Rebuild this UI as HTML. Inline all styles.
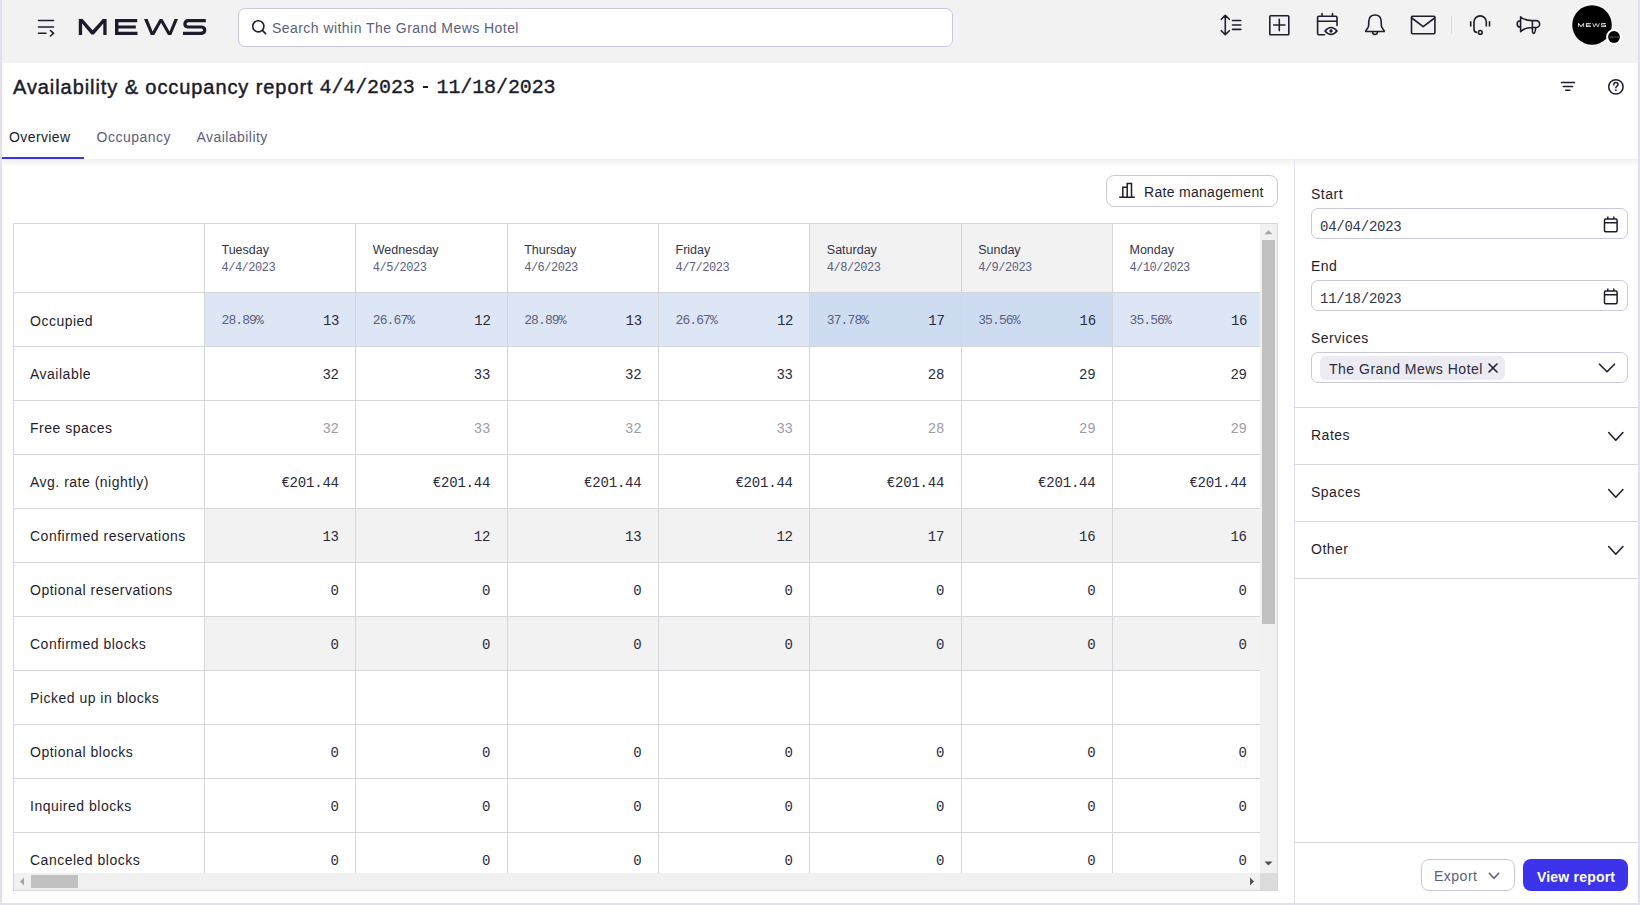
<!DOCTYPE html>
<html><head><meta charset="utf-8"><title>Availability & occupancy report</title>
<style>
*{box-sizing:border-box;margin:0;padding:0}
html,body{width:1640px;height:905px;overflow:hidden;background:#fff}
body{position:relative;font-family:"Liberation Sans",sans-serif;color:#1f1e2e;font-size:14px}
.abs{position:absolute}
.t{position:absolute;white-space:nowrap;line-height:20px;letter-spacing:0.5px}
.mono{font-family:"Liberation Mono",monospace}
svg{position:absolute;overflow:visible}
</style></head><body>

<div class="abs" style="left:0;top:0;width:2px;height:905px;background:#e1e0ec"></div>
<div class="abs" style="left:1638px;top:0;width:2px;height:905px;background:#e1e0ec"></div>
<div class="abs" style="left:0;top:903px;width:1640px;height:2px;background:#e1e0ec"></div>
<div class="abs" style="left:2px;top:0;width:1636px;height:63px;background:#f2f2f2"></div>
<svg style="left:0;top:0" width="1" height="1"><g stroke="#1f1e2e" stroke-width="1.6" stroke-linecap="round" fill="none"><path d="M38.5 20.5H53.5M38.5 27H53.5M38.5 33.3H46M50.5 30.5L53.5 33.3L50.5 36"/></g></svg>
<svg style="left:0;top:0" width="1" height="1"><g fill="#1c1b2b"><g id="mewslogo">
<path d="M78.8 19H82.6L92.6 30.2L102.8 19H106.6V35H103.3V23.6L93.8 34.4H91.4L82.1 23.6V35H78.8Z"/>
<path d="M115 19H137.2V22.2H118.4V25.6H135.8V28.5H118.4V31.8H137.5V35H115Z"/>
<path d="M144 19H147.6L152.6 31.5L159.7 19H162.4L169.5 31.5L174.5 19H178L171.3 35H168L161.1 22.8L154.2 35H150.8Z"/>
<path d="M188.5 19H205.8V22.2H189.5C187.5 22.2 186.6 22.9 186.6 23.9C186.6 24.9 187.5 25.5 189.5 25.5H200.5C204.7 25.5 206.3 27 206.3 30C206.3 33 204.5 35 200 35H183V31.8H200.3C202.3 31.8 203 31.1 203 30.1C203 29.1 202.3 28.5 200.3 28.5H189.2C185 28.5 183.3 27 183.3 24C183.3 21 185 19 188.5 19Z"/>
</g></g></svg>
<div class="abs" style="left:238px;top:8px;width:715px;height:39px;border:1px solid #c9c7de;border-radius:7px;background:#fff"></div>
<svg style="left:0;top:0" width="1" height="1"><g stroke="#1f1e2e" stroke-width="1.6" fill="none" stroke-linecap="round"><circle cx="258.3" cy="26.3" r="5.6"/><path d="M262.4 30.4L265.6 33.6"/></g></svg>
<div class="t" style="left:272px;top:18.4px;letter-spacing:0.45px;color:#5c5e7e">Search within The Grand Mews Hotel</div>
<svg style="left:0;top:0" width="1" height="1"><g stroke="#1f1e2e" stroke-width="1.6" fill="none" stroke-linecap="round" stroke-linejoin="round">
<path d="M1225.3 15.5V34.5M1221.3 19.3L1225.3 15.3L1229.3 19.3M1221.3 30.7L1225.3 34.7L1229.3 30.7M1232.5 20.5H1240.8M1232.5 25H1240.8M1232.5 29.4H1240.8"/>
<rect x="1269.8" y="15.7" width="19" height="19" rx="0.8"/>
<path d="M1279.3 19.4V30.6M1273.7 25H1284.9"/>
<path d="M1324.5 34.8H1318.8Q1317.6 34.8 1317.6 33.6V17.4Q1317.6 16.3 1318.8 16.3H1335.8Q1337 16.3 1337 17.4V25.5M1317.6 21.3H1337M1322 13.5V16.3M1332.5 13.5V16.3"/>
<path d="M1325 31Q1331 24 1337 31Q1331 38 1325 31Z"/>
<circle cx="1331" cy="31" r="0.9" fill="#1f1e2e"/>
<path d="M1365.8 30.8Q1367.4 29 1368.5 26.5Q1368.8 24 1368.8 21.5Q1369 15 1375 15Q1381 15 1381.2 21.5Q1381.2 24 1381.5 26.5Q1382.6 29 1384.2 30.8Q1384.5 31.5 1383.8 31.5H1366.2Q1365.5 31.5 1365.8 30.8ZM1372.5 31.5Q1372.5 34.5 1375 34.5Q1377.5 34.5 1377.5 31.5"/>
<rect x="1411.5" y="16.3" width="23.4" height="17.5" rx="1"/>
<path d="M1411.8 18L1423.2 26.6L1434.6 18"/>
<path d="M1486.3 26V22A6.15 6.15 0 0 0 1474 22V29.3Q1474 32 1476.5 32.4"/>
<circle cx="1480.3" cy="32.4" r="1.85"/>
<path d="M1470.7 21.8V26M1489.5 21.8V26"/>
<path d="M1520.6 16.8V31.6M1520.6 17Q1524 20.3 1532 20.6H1536.2A3.45 3.45 0 0 1 1536.2 27.5H1532Q1524 27.8 1520.6 31.6M1520.4 20.8A3.2 3.2 0 0 0 1520.4 27.2M1532.4 20.8V30.8Q1532.8 33.4 1533.9 33.4Q1535.2 33.2 1535.7 27.8"/>
</g>
<path d="M1451.5 16.5V33.5" stroke="#d8d7e6" stroke-width="1"/>
</svg>
<svg style="left:0;top:0" width="1" height="1">
<circle cx="1592" cy="25" r="20.6" fill="#fff"/><circle cx="1592" cy="25" r="19.8" fill="#000"/>
<use href="#mewslogo" transform="translate(1578 23.2) scale(0.2196 0.245) translate(-78.8 -19)" fill="#fff"/>
<circle cx="1614" cy="37" r="7.9" fill="#fff"/><circle cx="1614" cy="37" r="5.9" fill="#000"/><use href="#mewslogo" transform="translate(1609.4 36.3) scale(0.0737 0.094) translate(-78.8 -19)" fill="#999"/>
</svg>
<div class="t" style="left:13px;top:75px;font-size:20px;line-height:24px;letter-spacing:0.92px;-webkit-text-stroke:0.45px #1c1b2b;color:#1c1b2b">Availability &amp; occupancy report</div>
<div class="t mono" style="left:319.5px;top:75.5px;font-size:20px;line-height:24px;letter-spacing:-0.1px;-webkit-text-stroke:0.35px #1c1b2b;color:#1c1b2b">4/4/2023</div>
<div class="abs" style="left:422.7px;top:86.3px;width:5px;height:2px;background:#1c1b2b"></div>
<div class="t mono" style="left:436.5px;top:75.5px;font-size:20px;line-height:24px;letter-spacing:-0.1px;-webkit-text-stroke:0.35px #1c1b2b;color:#1c1b2b">11/18/2023</div>
<svg style="left:0;top:0" width="1" height="1"><g stroke="#1f1e2e" stroke-width="1.5" fill="none" stroke-linecap="round">
<path d="M1561.5 82.6H1574.5M1563.3 86.5H1572.6M1565.7 90.3H1569.9"/>
<circle cx="1615.9" cy="86.9" r="7.2"/>
<path d="M1613.8 84.8Q1613.8 82.6 1615.9 82.6Q1618 82.6 1618 84.6Q1618 85.8 1616.5 86.5Q1615.9 86.9 1615.9 87.8"/>
</g><circle cx="1615.9" cy="90.2" r="0.9" fill="#1f1e2e"/></svg>
<div class="t" style="left:9px;top:126.5px;letter-spacing:0.4px;color:#1c1b2b">Overview</div>
<div class="t" style="left:96.5px;top:126.5px;color:#5c5e7e">Occupancy</div>
<div class="t" style="left:196.5px;top:126.5px;letter-spacing:0.45px;color:#5c5e7e">Availability</div>
<div class="abs" style="left:2px;top:157px;width:82px;height:2px;background:#3b33e8"></div>
<div class="abs" style="left:2px;top:159px;width:1636px;height:8px;background:linear-gradient(#efefef,#fff)"></div>
<div class="abs" style="left:1294px;top:159px;width:1px;height:744px;background:#e1e0ec"></div>
<div class="t" style="left:1311px;top:184px">Start</div>
<div class="abs" style="left:1311px;top:208px;width:317px;height:31px;border:1px solid #c9c7de;border-radius:7px"></div>
<div class="t mono" style="left:1320px;top:216.5px;letter-spacing:-0.25px;color:#34344a">04/04/2023</div>
<div class="t" style="left:1311px;top:256px">End</div>
<div class="abs" style="left:1311px;top:280px;width:317px;height:31px;border:1px solid #c9c7de;border-radius:7px"></div>
<div class="t mono" style="left:1320px;top:288.5px;letter-spacing:-0.25px;color:#34344a">11/18/2023</div>
<svg style="left:0;top:0" width="1" height="1"><g stroke="#1f1e2e" stroke-width="1.5" fill="none"><rect x="1604.5" y="219.1" width="12.6" height="12.6" rx="1.2"/><path d="M1604.5 222.7H1617.1 M1607.8 216.5V219.1 M1613.8 216.5V219.1"/><rect x="1604.5" y="291.1" width="12.6" height="12.6" rx="1.2"/><path d="M1604.5 294.7H1617.1 M1607.8 288.5V291.1 M1613.8 288.5V291.1"/></g></svg>
<div class="t" style="left:1311px;top:328px">Services</div>
<div class="abs" style="left:1311px;top:352px;width:317px;height:31px;border:1px solid #c9c7de;border-radius:7px"></div>
<div class="abs" style="left:1320px;top:356px;width:185px;height:24px;border-radius:6px;background:#ecebf3"></div>
<div class="t" style="left:1329px;top:359px;color:#2a2a3a">The Grand Mews Hotel</div>
<svg style="left:0;top:0" width="1" height="1"><g stroke="#1f1e2e" stroke-width="1.6" fill="none" stroke-linecap="round" stroke-linejoin="round"><path d="M1489 364L1497 372M1497 364L1489 372"/><path d="M1599.5 364.2L1607 371.8L1614.5 364.2"/></g></svg>
<div class="abs" style="left:1295px;top:407px;width:343px;height:1px;background:#d7d7dd"></div>
<div class="t" style="left:1311px;top:425px">Rates</div>
<svg style="left:0;top:0" width="1" height="1"><path d="M1608.7 432.5L1615.8 440.2L1622.9 432.5" stroke="#1f1e2e" stroke-width="1.6" fill="none" stroke-linecap="round" stroke-linejoin="round"/></svg>
<div class="abs" style="left:1295px;top:464px;width:343px;height:1px;background:#d7d7dd"></div>
<div class="t" style="left:1311px;top:482px">Spaces</div>
<svg style="left:0;top:0" width="1" height="1"><path d="M1608.7 489.5L1615.8 497.2L1622.9 489.5" stroke="#1f1e2e" stroke-width="1.6" fill="none" stroke-linecap="round" stroke-linejoin="round"/></svg>
<div class="abs" style="left:1295px;top:521px;width:343px;height:1px;background:#d7d7dd"></div>
<div class="t" style="left:1311px;top:539px">Other</div>
<svg style="left:0;top:0" width="1" height="1"><path d="M1608.7 546.5L1615.8 554.2L1622.9 546.5" stroke="#1f1e2e" stroke-width="1.6" fill="none" stroke-linecap="round" stroke-linejoin="round"/></svg>
<div class="abs" style="left:1295px;top:578px;width:343px;height:1px;background:#d7d7dd"></div>
<div class="abs" style="left:1295px;top:842px;width:343px;height:1px;background:#d7d7dd"></div>
<div class="abs" style="left:1421px;top:859px;width:94px;height:32px;border:1px solid #c9c7de;border-radius:8px"></div>
<div class="t" style="left:1434px;top:866px;color:#5c5e7e">Export</div>
<svg style="left:0;top:0" width="1" height="1"><path d="M1489.3 873.3L1494 878.3L1498.7 873.3" stroke="#5c5e7e" stroke-width="1.6" fill="none" stroke-linecap="round" stroke-linejoin="round"/></svg>
<div class="abs" style="left:1523px;top:859px;width:105px;height:32px;border-radius:8px;background:#3c33ea"></div>
<div class="t" style="left:1537px;top:867px;color:#fff;font-weight:bold;letter-spacing:0.2px">View report</div>
<div class="abs" style="left:1106px;top:175px;width:172px;height:32px;border:1px solid #c9c7de;border-radius:8px"></div>
<svg style="left:0;top:0" width="1" height="1"><g stroke="#1f1e2e" stroke-width="1.5" fill="none"><path d="M1119.2 197.2H1134.8M1122.8 197V187.3H1127.2V197M1127.2 197V183.6H1131.5V197"/></g></svg>
<div class="t" style="left:1144px;top:182px;letter-spacing:0.3px">Rate management</div>
<div class="abs" style="left:13px;top:223px;width:1265px;height:668px;border:1px solid #d6d6da;overflow:hidden">
<div class="abs" style="left:796.33px;top:-1.00px;width:151.33px;height:69.00px;background:#f2f2f2"></div>
<div class="abs" style="left:947.67px;top:-1.00px;width:151.33px;height:69.00px;background:#f2f2f2"></div>
<div class="abs" style="left:191.00px;top:69.00px;width:151.33px;height:53.00px;background:#dde6f5"></div>
<div class="abs" style="left:342.33px;top:69.00px;width:151.33px;height:53.00px;background:#dde6f5"></div>
<div class="abs" style="left:493.67px;top:69.00px;width:151.33px;height:53.00px;background:#dde6f5"></div>
<div class="abs" style="left:645.00px;top:69.00px;width:151.33px;height:53.00px;background:#dde6f5"></div>
<div class="abs" style="left:796.33px;top:69.00px;width:151.33px;height:53.00px;background:#cedcf2"></div>
<div class="abs" style="left:947.67px;top:69.00px;width:151.33px;height:53.00px;background:#cedcf2"></div>
<div class="abs" style="left:1099.00px;top:69.00px;width:151.33px;height:53.00px;background:#dde6f5"></div>
<div class="abs" style="left:191.00px;top:285.00px;width:1055.00px;height:53.00px;background:#f2f2f2"></div>
<div class="abs" style="left:191.00px;top:393.00px;width:1055.00px;height:53.00px;background:#f2f2f2"></div>
<div class="abs" style="left:-1.00px;top:68.00px;width:1247.00px;height:1.00px;background:#d6d6da"></div>
<div class="abs" style="left:-1.00px;top:122.00px;width:1247.00px;height:1.00px;background:#d6d6da"></div>
<div class="abs" style="left:-1.00px;top:176.00px;width:1247.00px;height:1.00px;background:#d6d6da"></div>
<div class="abs" style="left:-1.00px;top:230.00px;width:1247.00px;height:1.00px;background:#d6d6da"></div>
<div class="abs" style="left:-1.00px;top:284.00px;width:1247.00px;height:1.00px;background:#d6d6da"></div>
<div class="abs" style="left:-1.00px;top:338.00px;width:1247.00px;height:1.00px;background:#d6d6da"></div>
<div class="abs" style="left:-1.00px;top:392.00px;width:1247.00px;height:1.00px;background:#d6d6da"></div>
<div class="abs" style="left:-1.00px;top:446.00px;width:1247.00px;height:1.00px;background:#d6d6da"></div>
<div class="abs" style="left:-1.00px;top:500.00px;width:1247.00px;height:1.00px;background:#d6d6da"></div>
<div class="abs" style="left:-1.00px;top:554.00px;width:1247.00px;height:1.00px;background:#d6d6da"></div>
<div class="abs" style="left:-1.00px;top:608.00px;width:1247.00px;height:1.00px;background:#d6d6da"></div>
<div class="abs" style="left:-1.00px;top:662.00px;width:1247.00px;height:1.00px;background:#d6d6da"></div>
<div class="abs" style="left:190.00px;top:-1.00px;width:1.00px;height:668.00px;background:#d6d6da"></div>
<div class="abs" style="left:341.33px;top:-1.00px;width:1.00px;height:668.00px;background:#d6d6da"></div>
<div class="abs" style="left:492.67px;top:-1.00px;width:1.00px;height:668.00px;background:#d6d6da"></div>
<div class="abs" style="left:644.00px;top:-1.00px;width:1.00px;height:668.00px;background:#d6d6da"></div>
<div class="abs" style="left:795.33px;top:-1.00px;width:1.00px;height:668.00px;background:#d6d6da"></div>
<div class="abs" style="left:946.67px;top:-1.00px;width:1.00px;height:668.00px;background:#d6d6da"></div>
<div class="abs" style="left:1098.00px;top:-1.00px;width:1.00px;height:668.00px;background:#d6d6da"></div>
<div class="t" style="left:207.5px;top:17.5px;font-size:12.5px;line-height:16px;letter-spacing:0px;color:#33334a">Tuesday</div>
<div class="t mono" style="left:207.5px;top:36px;font-size:12px;line-height:16px;letter-spacing:-0.5px;color:#5c5e7e">4/4/2023</div>
<div class="t" style="left:358.8px;top:17.5px;font-size:12.5px;line-height:16px;letter-spacing:0px;color:#33334a">Wednesday</div>
<div class="t mono" style="left:358.8px;top:36px;font-size:12px;line-height:16px;letter-spacing:-0.5px;color:#5c5e7e">4/5/2023</div>
<div class="t" style="left:510.2px;top:17.5px;font-size:12.5px;line-height:16px;letter-spacing:0px;color:#33334a">Thursday</div>
<div class="t mono" style="left:510.2px;top:36px;font-size:12px;line-height:16px;letter-spacing:-0.5px;color:#5c5e7e">4/6/2023</div>
<div class="t" style="left:661.5px;top:17.5px;font-size:12.5px;line-height:16px;letter-spacing:0px;color:#33334a">Friday</div>
<div class="t mono" style="left:661.5px;top:36px;font-size:12px;line-height:16px;letter-spacing:-0.5px;color:#5c5e7e">4/7/2023</div>
<div class="t" style="left:812.8px;top:17.5px;font-size:12.5px;line-height:16px;letter-spacing:0px;color:#33334a">Saturday</div>
<div class="t mono" style="left:812.8px;top:36px;font-size:12px;line-height:16px;letter-spacing:-0.5px;color:#5c5e7e">4/8/2023</div>
<div class="t" style="left:964.2px;top:17.5px;font-size:12.5px;line-height:16px;letter-spacing:0px;color:#33334a">Sunday</div>
<div class="t mono" style="left:964.2px;top:36px;font-size:12px;line-height:16px;letter-spacing:-0.5px;color:#5c5e7e">4/9/2023</div>
<div class="t" style="left:1115.5px;top:17.5px;font-size:12.5px;line-height:16px;letter-spacing:0px;color:#33334a">Monday</div>
<div class="t mono" style="left:1115.5px;top:36px;font-size:12px;line-height:16px;letter-spacing:-0.5px;color:#5c5e7e">4/10/2023</div>
<div class="t" style="left:16px;top:87px">Occupied</div>
<div class="t mono" style="left:207.5px;top:87px;font-size:13px;letter-spacing:-0.9px;color:#5c5e7e">28.89%</div>
<div class="t mono" style="right:937.7px;top:87px;font-size:14px;letter-spacing:-0.2px;color:#2b2b3d">13</div>
<div class="t mono" style="left:358.8px;top:87px;font-size:13px;letter-spacing:-0.9px;color:#5c5e7e">26.67%</div>
<div class="t mono" style="right:786.3px;top:87px;font-size:14px;letter-spacing:-0.2px;color:#2b2b3d">12</div>
<div class="t mono" style="left:510.2px;top:87px;font-size:13px;letter-spacing:-0.9px;color:#5c5e7e">28.89%</div>
<div class="t mono" style="right:635.0px;top:87px;font-size:14px;letter-spacing:-0.2px;color:#2b2b3d">13</div>
<div class="t mono" style="left:661.5px;top:87px;font-size:13px;letter-spacing:-0.9px;color:#5c5e7e">26.67%</div>
<div class="t mono" style="right:483.7px;top:87px;font-size:14px;letter-spacing:-0.2px;color:#2b2b3d">12</div>
<div class="t mono" style="left:812.8px;top:87px;font-size:13px;letter-spacing:-0.9px;color:#5c5e7e">37.78%</div>
<div class="t mono" style="right:332.3px;top:87px;font-size:14px;letter-spacing:-0.2px;color:#2b2b3d">17</div>
<div class="t mono" style="left:964.2px;top:87px;font-size:13px;letter-spacing:-0.9px;color:#5c5e7e">35.56%</div>
<div class="t mono" style="right:181.0px;top:87px;font-size:14px;letter-spacing:-0.2px;color:#2b2b3d">16</div>
<div class="t mono" style="left:1115.5px;top:87px;font-size:13px;letter-spacing:-0.9px;color:#5c5e7e">35.56%</div>
<div class="t mono" style="right:29.7px;top:87px;font-size:14px;letter-spacing:-0.2px;color:#2b2b3d">16</div>
<div class="t" style="left:16px;top:140px">Available</div>
<div class="t mono" style="right:938.2px;top:141.0px;font-size:14px;letter-spacing:-0.2px;color:#2b2b3d">32</div>
<div class="t mono" style="right:786.8px;top:141.0px;font-size:14px;letter-spacing:-0.2px;color:#2b2b3d">33</div>
<div class="t mono" style="right:635.5px;top:141.0px;font-size:14px;letter-spacing:-0.2px;color:#2b2b3d">32</div>
<div class="t mono" style="right:484.2px;top:141.0px;font-size:14px;letter-spacing:-0.2px;color:#2b2b3d">33</div>
<div class="t mono" style="right:332.8px;top:141.0px;font-size:14px;letter-spacing:-0.2px;color:#2b2b3d">28</div>
<div class="t mono" style="right:181.5px;top:141.0px;font-size:14px;letter-spacing:-0.2px;color:#2b2b3d">29</div>
<div class="t mono" style="right:30.2px;top:141.0px;font-size:14px;letter-spacing:-0.2px;color:#2b2b3d">29</div>
<div class="t" style="left:16px;top:194px">Free spaces</div>
<div class="t mono" style="right:938.2px;top:195.0px;font-size:14px;letter-spacing:-0.2px;color:#9d9ca8">32</div>
<div class="t mono" style="right:786.8px;top:195.0px;font-size:14px;letter-spacing:-0.2px;color:#9d9ca8">33</div>
<div class="t mono" style="right:635.5px;top:195.0px;font-size:14px;letter-spacing:-0.2px;color:#9d9ca8">32</div>
<div class="t mono" style="right:484.2px;top:195.0px;font-size:14px;letter-spacing:-0.2px;color:#9d9ca8">33</div>
<div class="t mono" style="right:332.8px;top:195.0px;font-size:14px;letter-spacing:-0.2px;color:#9d9ca8">28</div>
<div class="t mono" style="right:181.5px;top:195.0px;font-size:14px;letter-spacing:-0.2px;color:#9d9ca8">29</div>
<div class="t mono" style="right:30.2px;top:195.0px;font-size:14px;letter-spacing:-0.2px;color:#9d9ca8">29</div>
<div class="t" style="left:16px;top:248px">Avg. rate (nightly)</div>
<div class="t mono" style="right:938.2px;top:249.0px;font-size:14px;letter-spacing:-0.2px;color:#2b2b3d">€201.44</div>
<div class="t mono" style="right:786.8px;top:249.0px;font-size:14px;letter-spacing:-0.2px;color:#2b2b3d">€201.44</div>
<div class="t mono" style="right:635.5px;top:249.0px;font-size:14px;letter-spacing:-0.2px;color:#2b2b3d">€201.44</div>
<div class="t mono" style="right:484.2px;top:249.0px;font-size:14px;letter-spacing:-0.2px;color:#2b2b3d">€201.44</div>
<div class="t mono" style="right:332.8px;top:249.0px;font-size:14px;letter-spacing:-0.2px;color:#2b2b3d">€201.44</div>
<div class="t mono" style="right:181.5px;top:249.0px;font-size:14px;letter-spacing:-0.2px;color:#2b2b3d">€201.44</div>
<div class="t mono" style="right:30.2px;top:249.0px;font-size:14px;letter-spacing:-0.2px;color:#2b2b3d">€201.44</div>
<div class="t" style="left:16px;top:302px">Confirmed reservations</div>
<div class="t mono" style="right:938.2px;top:303.0px;font-size:14px;letter-spacing:-0.2px;color:#2b2b3d">13</div>
<div class="t mono" style="right:786.8px;top:303.0px;font-size:14px;letter-spacing:-0.2px;color:#2b2b3d">12</div>
<div class="t mono" style="right:635.5px;top:303.0px;font-size:14px;letter-spacing:-0.2px;color:#2b2b3d">13</div>
<div class="t mono" style="right:484.2px;top:303.0px;font-size:14px;letter-spacing:-0.2px;color:#2b2b3d">12</div>
<div class="t mono" style="right:332.8px;top:303.0px;font-size:14px;letter-spacing:-0.2px;color:#2b2b3d">17</div>
<div class="t mono" style="right:181.5px;top:303.0px;font-size:14px;letter-spacing:-0.2px;color:#2b2b3d">16</div>
<div class="t mono" style="right:30.2px;top:303.0px;font-size:14px;letter-spacing:-0.2px;color:#2b2b3d">16</div>
<div class="t" style="left:16px;top:356px">Optional reservations</div>
<div class="t mono" style="right:938.2px;top:357.0px;font-size:14px;letter-spacing:-0.2px;color:#2b2b3d">0</div>
<div class="t mono" style="right:786.8px;top:357.0px;font-size:14px;letter-spacing:-0.2px;color:#2b2b3d">0</div>
<div class="t mono" style="right:635.5px;top:357.0px;font-size:14px;letter-spacing:-0.2px;color:#2b2b3d">0</div>
<div class="t mono" style="right:484.2px;top:357.0px;font-size:14px;letter-spacing:-0.2px;color:#2b2b3d">0</div>
<div class="t mono" style="right:332.8px;top:357.0px;font-size:14px;letter-spacing:-0.2px;color:#2b2b3d">0</div>
<div class="t mono" style="right:181.5px;top:357.0px;font-size:14px;letter-spacing:-0.2px;color:#2b2b3d">0</div>
<div class="t mono" style="right:30.2px;top:357.0px;font-size:14px;letter-spacing:-0.2px;color:#2b2b3d">0</div>
<div class="t" style="left:16px;top:410px">Confirmed blocks</div>
<div class="t mono" style="right:938.2px;top:411.0px;font-size:14px;letter-spacing:-0.2px;color:#2b2b3d">0</div>
<div class="t mono" style="right:786.8px;top:411.0px;font-size:14px;letter-spacing:-0.2px;color:#2b2b3d">0</div>
<div class="t mono" style="right:635.5px;top:411.0px;font-size:14px;letter-spacing:-0.2px;color:#2b2b3d">0</div>
<div class="t mono" style="right:484.2px;top:411.0px;font-size:14px;letter-spacing:-0.2px;color:#2b2b3d">0</div>
<div class="t mono" style="right:332.8px;top:411.0px;font-size:14px;letter-spacing:-0.2px;color:#2b2b3d">0</div>
<div class="t mono" style="right:181.5px;top:411.0px;font-size:14px;letter-spacing:-0.2px;color:#2b2b3d">0</div>
<div class="t mono" style="right:30.2px;top:411.0px;font-size:14px;letter-spacing:-0.2px;color:#2b2b3d">0</div>
<div class="t" style="left:16px;top:464px">Picked up in blocks</div>
<div class="t" style="left:16px;top:518px">Optional blocks</div>
<div class="t mono" style="right:938.2px;top:519.0px;font-size:14px;letter-spacing:-0.2px;color:#2b2b3d">0</div>
<div class="t mono" style="right:786.8px;top:519.0px;font-size:14px;letter-spacing:-0.2px;color:#2b2b3d">0</div>
<div class="t mono" style="right:635.5px;top:519.0px;font-size:14px;letter-spacing:-0.2px;color:#2b2b3d">0</div>
<div class="t mono" style="right:484.2px;top:519.0px;font-size:14px;letter-spacing:-0.2px;color:#2b2b3d">0</div>
<div class="t mono" style="right:332.8px;top:519.0px;font-size:14px;letter-spacing:-0.2px;color:#2b2b3d">0</div>
<div class="t mono" style="right:181.5px;top:519.0px;font-size:14px;letter-spacing:-0.2px;color:#2b2b3d">0</div>
<div class="t mono" style="right:30.2px;top:519.0px;font-size:14px;letter-spacing:-0.2px;color:#2b2b3d">0</div>
<div class="t" style="left:16px;top:572px">Inquired blocks</div>
<div class="t mono" style="right:938.2px;top:573.0px;font-size:14px;letter-spacing:-0.2px;color:#2b2b3d">0</div>
<div class="t mono" style="right:786.8px;top:573.0px;font-size:14px;letter-spacing:-0.2px;color:#2b2b3d">0</div>
<div class="t mono" style="right:635.5px;top:573.0px;font-size:14px;letter-spacing:-0.2px;color:#2b2b3d">0</div>
<div class="t mono" style="right:484.2px;top:573.0px;font-size:14px;letter-spacing:-0.2px;color:#2b2b3d">0</div>
<div class="t mono" style="right:332.8px;top:573.0px;font-size:14px;letter-spacing:-0.2px;color:#2b2b3d">0</div>
<div class="t mono" style="right:181.5px;top:573.0px;font-size:14px;letter-spacing:-0.2px;color:#2b2b3d">0</div>
<div class="t mono" style="right:30.2px;top:573.0px;font-size:14px;letter-spacing:-0.2px;color:#2b2b3d">0</div>
<div class="t" style="left:16px;top:626px">Canceled blocks</div>
<div class="t mono" style="right:938.2px;top:627.0px;font-size:14px;letter-spacing:-0.2px;color:#2b2b3d">0</div>
<div class="t mono" style="right:786.8px;top:627.0px;font-size:14px;letter-spacing:-0.2px;color:#2b2b3d">0</div>
<div class="t mono" style="right:635.5px;top:627.0px;font-size:14px;letter-spacing:-0.2px;color:#2b2b3d">0</div>
<div class="t mono" style="right:484.2px;top:627.0px;font-size:14px;letter-spacing:-0.2px;color:#2b2b3d">0</div>
<div class="t mono" style="right:332.8px;top:627.0px;font-size:14px;letter-spacing:-0.2px;color:#2b2b3d">0</div>
<div class="t mono" style="right:181.5px;top:627.0px;font-size:14px;letter-spacing:-0.2px;color:#2b2b3d">0</div>
<div class="t mono" style="right:30.2px;top:627.0px;font-size:14px;letter-spacing:-0.2px;color:#2b2b3d">0</div>
<div class="t" style="left:16px;top:680px"></div>
<div class="t mono" style="right:938.2px;top:681.0px;font-size:14px;letter-spacing:-0.2px;color:#2b2b3d">0</div>
<div class="t mono" style="right:786.8px;top:681.0px;font-size:14px;letter-spacing:-0.2px;color:#2b2b3d">0</div>
<div class="t mono" style="right:635.5px;top:681.0px;font-size:14px;letter-spacing:-0.2px;color:#2b2b3d">0</div>
<div class="t mono" style="right:484.2px;top:681.0px;font-size:14px;letter-spacing:-0.2px;color:#2b2b3d">0</div>
<div class="t mono" style="right:332.8px;top:681.0px;font-size:14px;letter-spacing:-0.2px;color:#2b2b3d">0</div>
<div class="t mono" style="right:181.5px;top:681.0px;font-size:14px;letter-spacing:-0.2px;color:#2b2b3d">0</div>
<div class="t mono" style="right:30.2px;top:681.0px;font-size:14px;letter-spacing:-0.2px;color:#2b2b3d">0</div>
<div class="abs" style="left:1246.00px;top:-1.00px;width:18.00px;height:650.00px;background:#f1f1f1"></div>
<div class="abs" style="left:1248.00px;top:16.00px;width:13.00px;height:384.00px;background:#c1c1c1"></div>
<div class="abs" style="left:-1.00px;top:649.00px;width:1247.00px;height:18.00px;background:#f1f1f1"></div>
<div class="abs" style="left:17.00px;top:651.00px;width:47.00px;height:13.00px;background:#c1c1c1"></div>
<div class="abs" style="left:1246.00px;top:649.00px;width:18.00px;height:18.00px;background:#dcdcdc"></div>
</div>
<svg style="left:0;top:0" width="1" height="1"><g fill="#a3a3a3">
<path d="M1264.5 234.3L1268.5 230.3L1272.5 234.3Z"/>
<path d="M20 881.5L24 877.5V885.5Z"/>
</g><g fill="#505050"><path d="M1264.5 861.5H1272.5L1268.5 865.5Z"/><path d="M1250 877.5L1254 881.5L1250 885.5Z"/></g></svg>
</body></html>
